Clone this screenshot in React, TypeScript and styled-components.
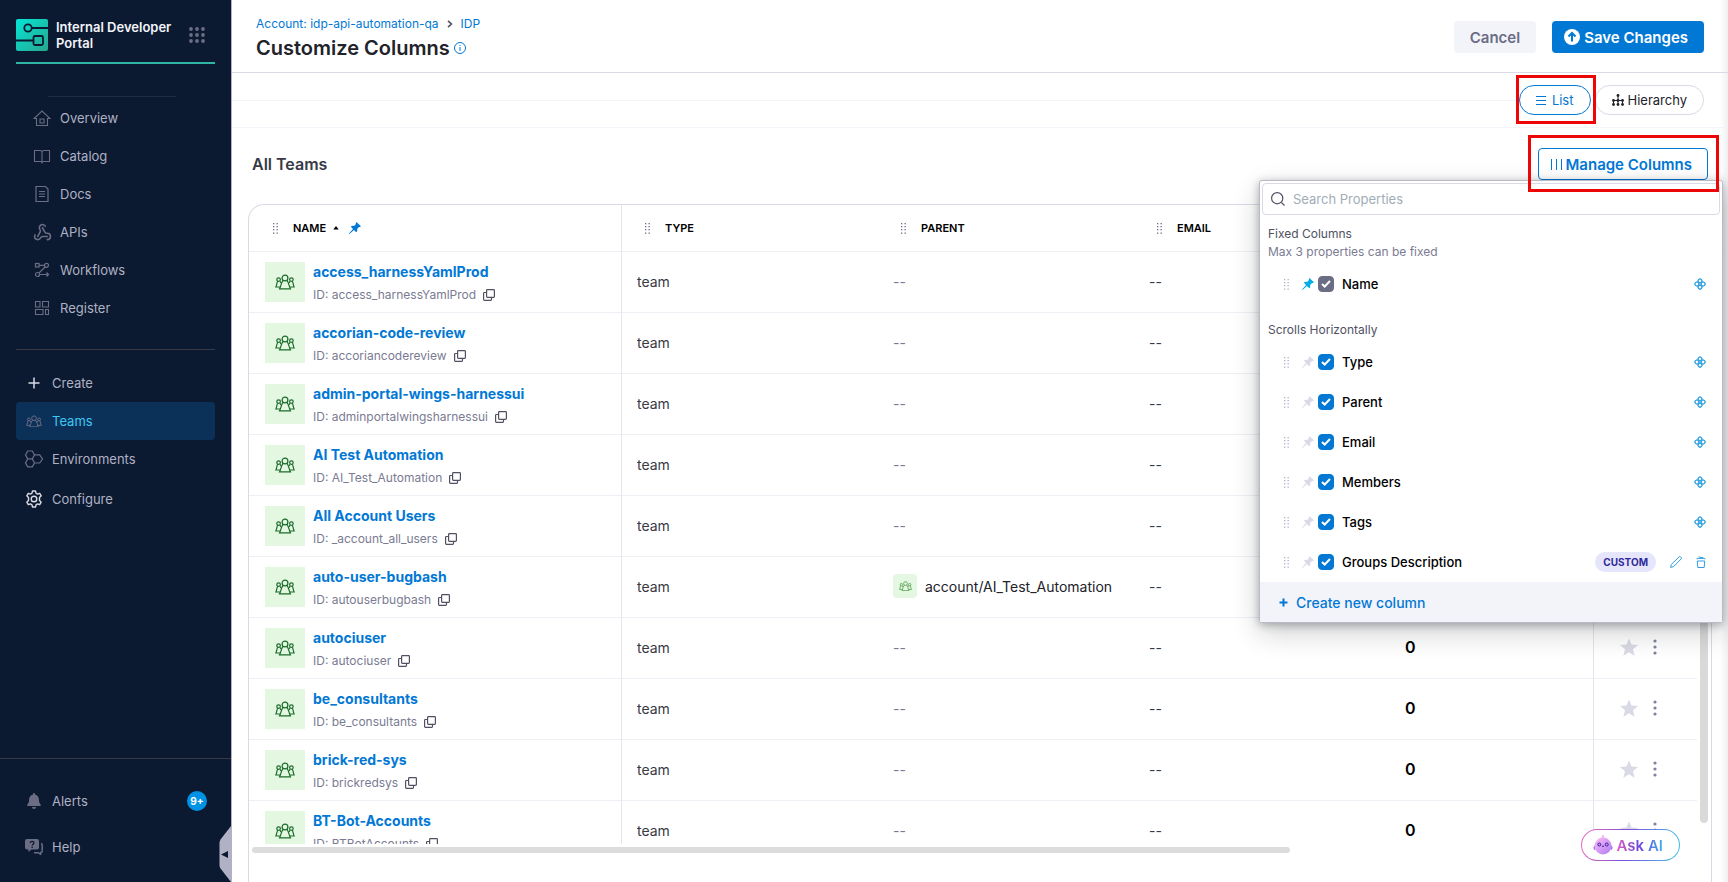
import React, { useState } from "react";
import styled, { createGlobalStyle, css } from "styled-components";
import { Webhook } from "lucide-react";

const GlobalStyle = createGlobalStyle`
  *, *::before, *::after { box-sizing: border-box; }
  body {
    margin: 0;
    font-family: Inter, "Liberation Sans", sans-serif;
    font-size: 14px;
    color: #22222a;
    background: #fff;
  }
  button, input { font-family: inherit; margin: 0; }
  button { cursor: pointer; }
  a { text-decoration: none; }
  svg { display: block; flex: none; }
`;

/* ---------- icons ---------- */

const TeamIcon = ({ size = 20 }: { size?: number }) => (
  <svg width={size} height={size * 0.8} viewBox="0 0 20 16" fill="none" stroke="currentColor" strokeWidth="1.2">
    <circle cx="10" cy="4" r="2.9" />
    <path d="M8 6.4C6.3 8.6 5.9 12 4.6 14.8h10.8C14.1 12 13.7 8.6 12 6.4" />
    <circle cx="3.6" cy="5.6" r="1.8" />
    <circle cx="16.4" cy="5.6" r="1.8" />
    <path d="M2.6 7.2C1.8 9 1.8 11 .9 13h4.2M5 7.2l.9 1.8M17.4 7.2c.8 1.8.8 3.8 1.7 5.8h-4.2M15 7.2l-.9 1.8" />
  </svg>
);

const HomeIcon = () => (
  <svg width="18" height="18" viewBox="0 0 18 18" fill="none" stroke="currentColor" strokeWidth="1.1">
    <path d="M3.500 9.500H1L9 2l8 7.500h-2.500v7h-11zM7 10h4v4H7z" />
  </svg>
);
const BookIcon = () => (
  <svg width="18" height="18" viewBox="0 0 18 18" fill="none" stroke="currentColor" strokeWidth="1.1">
    <path d="M9 16.500V5.500c0-1.300-.7-2-2-2H1.500v11h6c1 0 1.500.3 1.500 1M9 5.500c0-1.300.7-2 2-2h5.500v11h-6c-1 0-1.500.3-1.500 1" />
  </svg>
);
const DocIcon = () => (
  <svg width="18" height="18" viewBox="0 0 18 18" fill="none" stroke="currentColor" strokeWidth="1.2">
    <path d="M3 1.500h9.500L15 4v12.500H3zM6 6.500h6M6 9h6M6 11.500h6" />
  </svg>
);
const FlowIcon = () => (
  <svg width="18" height="18" viewBox="0 0 18 18" fill="none" stroke="currentColor" strokeWidth="1.2">
    <rect x="2.500" y="2.500" width="3.500" height="3.500" />
    <circle cx="13.500" cy="4.300" r="2" />
    <circle cx="4.500" cy="13.500" r="2" />
    <path d="M6 4.300h5.500M12 6l-6 6M6.500 13.500h9M13.500 11.500l2 2-2 2" />
  </svg>
);
const RegisterIcon = () => (
  <svg width="18" height="18" viewBox="0 0 18 18" fill="none" stroke="currentColor" strokeWidth="1.1">
    <path d="M2.500 2.500H7V8H2.500zM9.500 2.500h6V8h-6zM2.500 10.500H10v5H2.500zM12.500 10.500h3v5h-3z" />
  </svg>
);
const PlusIcon = ({ size = 18, weight = 1.5 }: { size?: number; weight?: number }) => (
  <svg width={size} height={size} viewBox="0 0 18 18" stroke="currentColor" strokeWidth={weight}>
    <path d="M9 3.500v11M3.500 9h11" />
  </svg>
);
const BoldPlusIcon = () => (
  <svg width="9" height="9" viewBox="0 0 9 9" stroke="currentColor" strokeWidth="2">
    <path d="M4.500 .5v8M.5 4.500h8" />
  </svg>
);
const HexIcon = () => (
  <svg width="20" height="18" viewBox="0 0 20 18" fill="none" stroke="currentColor" strokeWidth="1.2">
    <path d="M3.700 1h4.600l2.200 3.900-2.200 3.900H3.700L1.500 4.900zM3.700 8.900h4.600l2.200 4-2.200 4H3.700l-2.200-4zM10.500 4.900h5.200L18.500 9l-2.800 4h-5.200" />
  </svg>
);
const GearIcon = () => (
  <svg width="18" height="18" viewBox="0 0 18 18" fill="none" stroke="currentColor" strokeWidth="1.4" strokeLinejoin="round">
    <path d="M7.500 1h3l.5 2.200 1.500.9 2.200-.8 1.500 2.500L14.500 7.500v3l1.700 1.700-1.500 2.500-2.200-.8-1.500.9-.5 2.200h-3L7 14.800l-1.500-.9-2.200.8-1.500-2.500L3.500 10.500v-3L1.800 5.800l1.500-2.500 2.200.8L7 3.200z" />
    <circle cx="9" cy="9" r="2.800" />
  </svg>
);
const BellIcon = () => (
  <svg width="14" height="16" viewBox="0 0 14 16" fill="currentColor">
    <path d="M7 0a1 1 0 0 1 1 1v.6c2.300.5 3.900 2.400 3.900 4.900 0 2.800.6 3.700 1.700 5 .6.7.2 1.500-.7 1.500H1.100c-.9 0-1.300-.8-.7-1.500 1.100-1.300 1.700-2.200 1.700-5 0-2.500 1.600-4.400 3.900-4.900V1a1 1 0 0 1 1-1zM5 14h4a2 2 0 0 1-4 0z" />
  </svg>
);
const HelpIcon = () => (
  <svg width="18" height="16" viewBox="0 0 18 16">
    <path d="M2 0h10a2 2 0 0 1 2 2v6.500a2 2 0 0 1-2 2H6.500L3.500 13v-2.500H2a2 2 0 0 1-2-2V2a2 2 0 0 1 2-2z" fill="currentColor" />
    <path d="M16 4.500a1.500 1.500 0 0 1 1.200 1.500v6a1.500 1.500 0 0 1-1.500 1.500v2L13.500 13.700H9" fill="none" stroke="currentColor" strokeWidth="1.5" />
    <path d="M5.300 4c0-2.200 3.600-2.100 3.600 0 0 1.300-1.700 1.200-1.700 2.500M7.200 7.600v1.400" fill="none" stroke="#0b1a30" strokeWidth="1.3" />
  </svg>
);
const Logo = () => (
  <svg width="32" height="32" viewBox="0 0 32 32" fill="none" stroke="#0b1a30" strokeWidth="1.8">
    <defs>
      <linearGradient id="idp" x1="0" y1="0" x2="1" y2="1">
        <stop offset="0" stopColor="#04e6d6" />
        <stop offset="1" stopColor="#27a68e" />
      </linearGradient>
    </defs>
    <rect width="32" height="32" rx="2" fill="url(#idp)" stroke="none" />
    <circle cx="12" cy="9" r="3.700" />
    <path d="M16 9h16M0 21.500h17.500" />
    <rect x="17.500" y="17" width="9.500" height="9" rx="1.500" />
  </svg>
);
const AppsIcon = () => (
  <svg width="16" height="16" viewBox="0 0 16 16" fill="currentColor">
    {[2, 8, 14].map((y) => [2, 8, 14].map((x) => <circle key={`${x}-${y}`} cx={x} cy={y} r="1.900" />))}
  </svg>
);
const InfoIcon = () => (
  <svg width="12" height="12" viewBox="0 0 12 12" fill="none" stroke="currentColor">
    <circle cx="6" cy="6" r="5.500" />
    <path d="M6 5v4M6 3v1" />
  </svg>
);
const ChevronIcon = () => (
  <svg width="6" height="8" viewBox="0 0 6 8" fill="none" stroke="currentColor" strokeWidth="1.6">
    <path d="m1 .8 3.400 3.200L1 7.200" />
  </svg>
);
const UploadIcon = () => (
  <svg width="16" height="16" viewBox="0 0 16 16">
    <circle cx="8" cy="8" r="8" fill="#fff" />
    <path d="M8 12.500V4.500M4.500 7.500 8 4l3.500 3.500" fill="none" stroke="#0278d5" strokeWidth="2" />
  </svg>
);
const ListIcon = () => (
  <svg width="10" height="10" viewBox="0 0 10 10" stroke="currentColor">
    <path d="M0 1.500h10M0 5.500h10M0 9.500h10" />
  </svg>
);
const HierarchyIcon = () => (
  <svg width="12" height="12" viewBox="0 0 12 12" fill="currentColor" stroke="currentColor">
    <path d="M6 1v10M1.500 10.500v-4h9v4" fill="none" />
    {[[6, 1.5], [1.5, 6.5], [6, 6.5], [10.5, 6.5], [1.5, 10.5], [6, 10.5], [10.5, 10.5]].map(([x, y]) => (
      <circle key={`${x}-${y}`} cx={x} cy={y} r="1.400" stroke="none" />
    ))}
  </svg>
);
const BarsIcon = () => (
  <svg width="11" height="11" viewBox="0 0 11 11" stroke="currentColor">
    <path d="M.5 0v11M5.500 0v11M10.500 0v11" />
  </svg>
);
const GripIcon = () => (
  <svg width="5" height="11" viewBox="0 0 5 11" fill="currentColor">
    {[0, 3, 6, 9.5].map((y) => [0, 3.5].map((x) => <rect key={`${x}-${y}`} x={x} y={y} width="1.3" height="1.3" />))}
  </svg>
);
const PinIcon = () => (
  <svg width="12" height="12" viewBox="0 0 12 12" fill="currentColor">
    <path d="M7.400 0 12 4.300l-1.200.8-.8-.1-1.900 1.900c.4 1.500 0 2.500-.8 3.300L4.900 8 .5 12 0 11.500 4 7.100 1.800 4.800c.9-.8 1.900-1.200 3.300-.8L7 2.100l-.2-.9z" />
  </svg>
);
const SortIcon = () => (
  <svg width="6" height="4" viewBox="0 0 6 4" fill="currentColor">
    <path d="M3 0l2.700 3.500H.3z" />
  </svg>
);
const CopyIcon = () => (
  <svg width="12" height="12" viewBox="0 0 12 12" fill="none" stroke="currentColor" strokeWidth="1.2">
    <rect x="3.600" y=".6" width="7.800" height="7.800" rx=".8" />
    <path d="M3.600 3.500H1.400a.8.800 0 0 0-.8.800v6.300a.8.800 0 0 0 .8.800h6.300a.8.800 0 0 0 .8-.8V8.400" />
  </svg>
);
const StarIcon = () => (
  <svg width="20" height="19" viewBox="0 0 20 19" fill="currentColor">
    <path d="m10 .5 2.500 6 6.500.5-5 4.200 1.600 6.600L10 14.300l-5.600 3.500L6 11.200 1 7l6.500-.5z" />
  </svg>
);
const DotsIcon = () => (
  <svg width="4" height="16" viewBox="0 0 4 16" fill="currentColor">
    <circle cx="2" cy="2" r="1.600" />
    <circle cx="2" cy="8" r="1.600" />
    <circle cx="2" cy="14" r="1.600" />
  </svg>
);
const SearchIcon = () => (
  <svg width="14" height="14" viewBox="0 0 14 14" fill="none" stroke="currentColor" strokeWidth="1.2">
    <circle cx="6.200" cy="6.200" r="5.600" />
    <path d="m10.300 10.300 3.200 3.200" />
  </svg>
);
const HarnessIcon = () => (
  <svg width="12" height="12" viewBox="0 0 12 12" fill="none" stroke="currentColor" strokeWidth="1.3">
    <rect x="4.200" y="1.100" width="3.600" height="3.600" rx="1.300" transform="rotate(45 6 2.900)" />
    <rect x="4.200" y="7.300" width="3.600" height="3.600" rx="1.300" transform="rotate(45 6 9.100)" />
    <rect x="1.100" y="4.200" width="3.600" height="3.600" rx="1.300" transform="rotate(45 2.900 6)" />
    <rect x="7.300" y="4.200" width="3.600" height="3.600" rx="1.300" transform="rotate(45 9.100 6)" />
  </svg>
);
const PencilIcon = () => (
  <svg width="12" height="12" viewBox="0 0 12 12" fill="none" stroke="currentColor">
    <path d="M.6 11.400 1.300 8.500 9 .9a1 1 0 0 1 1.500 0l.6.600a1 1 0 0 1 0 1.500L3.500 10.700z" />
  </svg>
);
const TrashIcon = () => (
  <svg width="10" height="12" viewBox="0 0 10 12" fill="none" stroke="currentColor">
    <path d="M.5 2.800c3-.6 6-.6 9 0M2.500 1l5 .8M1.300 5h7.400l-.5 6.500H1.800z" />
  </svg>
);
const CheckIcon = () => (
  <svg width="10" height="8" viewBox="0 0 10 8" fill="none" stroke="#fff" strokeWidth="2">
    <path d="m1 4 2.700 2.500L9 1" />
  </svg>
);
const RobotIcon = () => (
  <svg width="20" height="20" viewBox="0 0 20 20">
    <defs>
      <linearGradient id="bot" x1="0" y1="0" x2="1" y2="1">
        <stop offset="0" stopColor="#fcbdf5" />
        <stop offset="1" stopColor="#b07af5" />
      </linearGradient>
    </defs>
    <path d="M10 0v3" stroke="#f3b4ef" strokeWidth="1.5" />
    <circle cx="10" cy="1.200" r="1.200" fill="#f9bdf2" />
    <path d="M2 10 .3 12.500l.8 2.500 2-1M18 10l1.700 2.500-.8 2.500-2-1" fill="#a374ee" />
    <circle cx="10" cy="11" r="8.500" fill="url(#bot)" />
    <circle cx="6.300" cy="9.500" r="1.500" fill="#c79cf6" stroke="#3b1d9a" />
    <circle cx="13.700" cy="9.500" r="1.500" fill="#c79cf6" stroke="#3b1d9a" />
    <path d="M9 11q1 1 2 0" fill="none" stroke="#3b1d9a" />
  </svg>
);

/* ---------- sidebar ---------- */

const Page = styled.div`
  display: flex;
  height: 100vh;
  overflow: hidden;
`;

const Sidebar = styled.aside`
  position: relative;
  width: 232px;
  flex: none;
  display: flex;
  flex-direction: column;
  background: #0b1a30;
  border-right: 1px solid #b0b1c4;
  color: #b0b1c4;
  font-size: 13px;
`;

const Brand = styled.div`
  display: flex;
  align-items: center;
  gap: 8px;
  margin: 16px 16px 0;
  height: 48px;
  padding: 0 10px 8px 0;
  border-bottom: 2px solid #30b5a3;
  color: #6b6d85;
`;

const BrandName = styled.div`
  flex: 1;
  font-weight: 600;
  line-height: 16px;
  color: #f3f3fa;
`;

const IconButton = styled.button<{ $color?: string }>`
  display: flex;
  padding: 0;
  border: 0;
  background: none;
  color: ${(p) => p.$color ?? "inherit"};
`;

const NavRule = styled.hr<{ $inset?: boolean }>`
  width: ${(p) => (p.$inset ? "128px" : "auto")};
  margin: ${(p) => (p.$inset ? "32px 48px 2px" : "22px 16px 14px")};
  border: 0;
  border-top: 1px solid ${(p) => (p.$inset ? "#1f2d42" : "#383946")};
`;

const Nav = styled.nav<{ $indent?: boolean }>`
  display: flex;
  flex-direction: column;
  padding: ${(p) => (p.$indent ? "0 16px 0 24px" : "0 16px")};
`;

const NavLink = styled.a<{ $active?: boolean; $tall?: boolean }>`
  display: flex;
  align-items: center;
  gap: 8px;
  height: ${(p) => (p.$tall ? "42px" : "38px")};
  padding: 0 8px;
  border-radius: 4px;
  color: ${(p) => (p.$active ? "#3dc7f6" : "#b0b1c4")};
  ${(p) =>
    p.$active &&
    css`
      background: #0c3158;
    `}
`;

const NavIcon = styled.span<{ $bright?: boolean }>`
  display: flex;
  justify-content: center;
  width: 20px;
  color: ${(p) => (p.$bright ? "#d9dae5" : "#6b6d85")};
`;

const SidebarFooter = styled.div`
  margin-top: auto;
  padding: 19px 16px 12px;
  border-top: 1px solid #383946;
  display: flex;
  flex-direction: column;
`;

const FooterLink = styled.a`
  display: flex;
  align-items: center;
  gap: 8px;
  height: 46px;
  padding: 0 8px;
  color: #b0b1c4;
`;

const Badge = styled.span`
  margin-left: auto;
  width: 20px;
  height: 20px;
  border-radius: 10px;
  background: #0092e4;
  color: #fff;
  font-size: 10px;
  font-weight: 700;
  line-height: 20px;
  text-align: center;
`;

const CollapseTab = styled.button`
  position: absolute;
  right: 0;
  bottom: 0;
  padding: 0;
  border: 0;
  background: none;
`;

/* ---------- header and controls ---------- */

const Main = styled.main`
  flex: 1;
  min-width: 0;
  display: flex;
  flex-direction: column;
  background: linear-gradient(to left, #f0f0f1, #fff 8px);
`;

const TopBar = styled.header`
  display: flex;
  align-items: center;
  justify-content: space-between;
  height: 73px;
  padding: 2px 24px 0;
  border-bottom: 1px solid #d9dae5;
`;

const Heading = styled.div`
  padding-top: 4px;
`;

const Crumbs = styled.nav`
  display: flex;
  align-items: center;
  gap: 8px;
  margin-bottom: 2px;
  font-size: 12px;
  line-height: 16px;
  color: #4f5162;
`;

const CrumbLink = styled.a`
  color: #0278d5;
`;

const TitleRow = styled.div`
  display: flex;
  align-items: center;
  gap: 4px;
  color: #0278d5;
`;

const Title = styled.h1`
  margin: 0;
  font-size: 20px;
  line-height: 28px;
  font-weight: 600;
  color: #22222a;
`;

const Actions = styled.div`
  display: flex;
  align-items: center;
  gap: 16px;
`;

const buttonBase = css`
  display: flex;
  align-items: center;
  gap: 4px;
  height: 32px;
  border-radius: 4px;
  font-size: 15px;
  font-weight: 600;
`;

const Button = styled.button<{ $variant: "primary" | "muted" | "outline" }>`
  ${buttonBase}
  ${(p) =>
    p.$variant === "primary" &&
    css`
      padding: 0 16px 0 12px;
      border: 0;
      background: #0278d5;
      color: #fff;
    `}
  ${(p) =>
    p.$variant === "muted" &&
    css`
      padding: 0 16px;
      border: 0;
      background: #f3f3fa;
      color: #6b6d85;
    `}
  ${(p) =>
    p.$variant === "outline" &&
    css`
      padding: 0 15px 0 12px;
      border: 1px solid #0278d5;
      background: #fff;
      color: #0278d5;
    `}
`;

const ViewBar = styled.div`
  display: flex;
  align-items: center;
  height: 55px;
  padding-right: 24px;
  border-bottom: 1px solid #f3f3fa;
`;

const ViewRule = styled.div`
  flex: 1;
  height: 1px;
  background: #f3f3fa;
`;

const ViewSwitch = styled.div`
  display: flex;
  gap: 4px;
`;

const Marked = styled.div`
  position: relative;
`;

const MarkBox = styled.span<{ $inset: string }>`
  position: absolute;
  inset: ${(p) => p.$inset};
  border: 3px solid #ec0606;
  pointer-events: none;
  z-index: 3;
`;

const Pill = styled.button<{ $active?: boolean }>`
  display: flex;
  align-items: center;
  gap: ${(p) => (p.$active ? "6px" : "4px")};
  height: 30px;
  padding: 0 16px;
  border: 1px solid ${(p) => (p.$active ? "#0278d5" : "#d9dae5")};
  border-radius: 15px;
  background: #fff;
  color: ${(p) => (p.$active ? "#0278d5" : "#22222a")};
  font-size: 13px;
`;

const ListHeader = styled.div`
  display: flex;
  align-items: flex-start;
  justify-content: space-between;
  padding: 20px 20px 24px;
`;

const ListTitle = styled.h2`
  margin: 0;
  font-size: 16px;
  line-height: 32px;
  font-weight: 600;
  color: #383946;
`;

/* ---------- manage columns popover ---------- */

const Popover = styled.div`
  position: absolute;
  top: 100%;
  right: -15px;
  z-index: 2;
  width: 464px;
  padding-top: 2px;
  border: 1px solid #b9bac6;
  border-radius: 3px;
  background: #fff;
  box-shadow: 0 2px 8px rgba(16, 22, 26, 0.3), 0 10px 28px rgba(16, 22, 26, 0.2);
`;

const SearchBox = styled.label`
  display: flex;
  align-items: center;
  gap: 6px;
  height: 32px;
  margin: 0 2px;
  padding: 0 8px;
  border: 1px solid #d9dae5;
  border-radius: 4px;
  color: #4f5162;
`;

const SearchInput = styled.input`
  flex: 1;
  border: 0;
  outline: 0;
  background: none;
  font-size: 13px;
  &::placeholder { color: #9fadb8; }
`;

const GroupHeading = styled.div`
  padding: 10px 8px 3px;
  font-size: 12px;
  line-height: 18px;
  color: #4f5162;
`;

const GroupHint = styled.div`
  color: #7a7b93;
`;

const Rows = styled.ul<{ $spaced?: boolean }>`
  list-style: none;
  margin: 0 0 ${(p) => (p.$spaced ? "7px" : "0")};
  padding: 0 16px 0 24px;
`;

const ColumnRow = styled.li`
  display: flex;
  align-items: center;
  height: 40px;
  color: #b0b1c4;
`;

const PinButton = styled(IconButton)`
  margin: 0 4px 0 13px;
`;

const CheckLabel = styled.label`
  flex: 1;
  display: flex;
  align-items: center;
  gap: 8px;
  font-size: 13px;
  font-weight: 500;
  color: #000;
`;

const CheckWrap = styled.span`
  display: grid;
  place-items: center;
  > * { grid-area: 1 / 1; }
`;

const CheckInput = styled.input`
  appearance: none;
  width: 16px;
  height: 16px;
  border-radius: 4px;
  background: #fff;
  border: 1px solid #b0b1c4;
  &:checked { background: #0278d5; border-color: #0278d5; }
  &:checked:disabled { background: #6b6d85; border-color: #6b6d85; }
`;

const RowTools = styled.span`
  display: flex;
  align-items: center;
  gap: 14px;
  color: #2f9fe0;
`;

const CustomTag = styled.span`
  height: 20px;
  padding: 0 8px;
  border-radius: 10px;
  background: #e5e5fb;
  color: #2f2a9a;
  font-size: 10px;
  font-weight: 700;
  line-height: 20px;
`;

const CreateButton = styled.button`
  display: flex;
  align-items: center;
  gap: 8px;
  width: 100%;
  height: 40px;
  padding: 0 19px;
  border: 0;
  background: #f3f3fa;
  color: #0278d5;
  font-size: 14px;
  font-weight: 500;
`;

/* ---------- table ---------- */

const Card = styled.section`
  flex: 1;
  min-height: 0;
  margin: 0 16px;
  padding-bottom: 29px;
  display: flex;
  flex-direction: column;
  border: 1px solid #d9dae5;
  border-bottom: 0;
  border-radius: 16px 16px 0 0;
`;

const Viewport = styled.div`
  flex: 1;
  min-height: 0;
  display: flex;
  gap: 3px;
  padding-right: 3px;
`;

const TableClip = styled.div`
  flex: 1;
  min-width: 0;
  overflow: hidden;
`;

const VerticalBar = styled.div`
  width: 8px;
  margin: 48px 0 21px;
  border-radius: 4px;
  background: #d9d9d9;
`;

const HorizontalBar = styled.div`
  width: 71%;
  height: 6px;
  margin: 3px 3px 0;
  border-radius: 3px;
  background: #dcdcdc;
`;

const Table = styled.table`
  width: 100%;
  table-layout: fixed;
  border-collapse: separate;
  border-spacing: 0;
`;

const Col = styled.col<{ $width?: number }>`
  width: ${(p) => (p.$width ? `${p.$width}px` : "auto")};
`;

const HeadCell = styled.th<{ $first?: boolean; $divider?: boolean }>`
  height: 47px;
  padding: 0 0 0 ${(p) => (p.$first ? "24px" : "23px")};
  border-bottom: 1px solid #eeeef5;
  ${(p) => p.$divider && css`border-right: 1px solid #e4e4ee;`}
  font-size: 11px;
  font-weight: 600;
  text-align: left;
  color: #000;
`;

const HeadLabel = styled.div`
  display: flex;
  align-items: center;
`;

const HeadText = styled.span`
  margin: 0 7px 0 15px;
`;

const HeadPin = styled.span`
  margin-left: 10px;
  color: #0278d5;
`;

const GripHandle = styled.span`
  color: #6b6d85;
`;

const Cell = styled.td<{ $first?: boolean; $divider?: boolean; $muted?: boolean }>`
  height: 61px;
  padding: ${(p) => (p.$first ? "0 0 0 16px" : "0 0 2px 15px")};
  border-bottom: 1px solid #eeeef5;
  ${(p) => p.$divider && css`border-right: 1px solid #e4e4ee;`}
  color: ${(p) => (p.$muted ? "#7a7b93" : "#383946")};
`;

const Entity = styled.div<{ $dark?: boolean }>`
  display: flex;
  align-items: center;
  gap: 8px;
  color: #22222a;
`;

const Avatar = styled.span<{ $small?: boolean }>`
  display: flex;
  align-items: center;
  justify-content: center;
  width: ${(p) => (p.$small ? 24 : 40)}px;
  height: ${(p) => (p.$small ? 24 : 40)}px;
  border-radius: ${(p) => (p.$small ? "4px" : "0")};
  background: #e4f7e1;
  color: ${(p) => (p.$small ? "#4f9a45" : "#1b6c2b")};
`;

const EntityText = styled.div`
  padding-top: 2px;
`;

const EntityLink = styled.a`
  display: block;
  font-size: 14px;
  font-weight: 700;
  line-height: 20px;
  color: #0278d5;
`;

const EntityId = styled.div`
  display: flex;
  align-items: center;
  gap: 7px;
  margin-top: 3px;
  font-size: 12px;
  line-height: 20px;
  color: #7a7b93;
`;

const Count = styled.span`
  font-size: 16px;
  font-weight: 600;
  color: #000;
`;

const RowActions = styled.div`
  display: flex;
  align-items: center;
  gap: 14px;
  padding-left: 10px;
`;

const AskButton = styled.button`
  position: fixed;
  right: 48px;
  bottom: 21px;
  z-index: 4;
  display: flex;
  align-items: center;
  gap: 4px;
  height: 32px;
  padding: 0 16px 0 11px;
  border: 1px solid transparent;
  border-radius: 16px;
  background: linear-gradient(#fff, #fff) padding-box,
    linear-gradient(100deg, #f26bb5, #7c4fe0 45%, #42c3e8) border-box;
`;

const AskText = styled.span`
  font-size: 15px;
  font-weight: 600;
  background: linear-gradient(90deg, #d65fc0, #6a45dd 50%, #42b3e8);
  background-clip: text;
  color: transparent;
`;

/* ---------- data ---------- */

const primaryNav = [
  { label: "Overview", icon: <HomeIcon /> },
  { label: "Catalog", icon: <BookIcon /> },
  { label: "Docs", icon: <DocIcon /> },
  { label: "APIs", icon: <Webhook size={19} strokeWidth={2} /> },
  { label: "Workflows", icon: <FlowIcon /> },
  { label: "Register", icon: <RegisterIcon /> },
];

const teams = [
  { name: "access_harnessYamlProd", id: "access_harnessYamlProd" },
  { name: "accorian-code-review", id: "accoriancodereview" },
  { name: "admin-portal-wings-harnessui", id: "adminportalwingsharnessui" },
  { name: "AI Test Automation", id: "AI_Test_Automation" },
  { name: "All Account Users", id: "_account_all_users" },
  { name: "auto-user-bugbash", id: "autouserbugbash", parent: "account/AI_Test_Automation" },
  { name: "autociuser", id: "autociuser" },
  { name: "be_consultants", id: "be_consultants" },
  { name: "brick-red-sys", id: "brickredsys" },
  { name: "BT-Bot-Accounts", id: "BTBotAccounts" },
];

const scrollColumns = ["Type", "Parent", "Email", "Members", "Tags", "Groups Description"];

function ColumnOption({ label, fixed, custom }: { label: string; fixed?: boolean; custom?: boolean }) {
  const [checked, setChecked] = useState(true);
  return (
    <ColumnRow>
      <GripIcon />
      <PinButton aria-label={`Pin ${label}`} $color={fixed ? "#00ade4" : "#d9dae5"}>
        <PinIcon />
      </PinButton>
      <CheckLabel>
        <CheckWrap>
          <CheckInput type="checkbox" checked={checked} disabled={fixed} onChange={() => setChecked(!checked)} />
          {checked && <CheckIcon />}
        </CheckWrap>
        {label}
      </CheckLabel>
      <RowTools>
        {custom ? (
          <>
            <CustomTag>CUSTOM</CustomTag>
            <IconButton aria-label="Edit column"><PencilIcon /></IconButton>
            <IconButton aria-label="Delete column"><TrashIcon /></IconButton>
          </>
        ) : (
          <HarnessIcon />
        )}
      </RowTools>
    </ColumnRow>
  );
}

function ColumnHead({ label, pinned }: { label: string; pinned?: boolean }) {
  return (
    <HeadCell $first={pinned} $divider={pinned}>
      <HeadLabel>
        <GripHandle><GripIcon /></GripHandle>
        <HeadText>{label}</HeadText>
        {pinned && (
          <>
            <SortIcon />
            <HeadPin><PinIcon /></HeadPin>
          </>
        )}
      </HeadLabel>
    </HeadCell>
  );
}

export default function App() {
  return (
    <>
      <GlobalStyle />
      <Page>
        <Sidebar>
          <Brand>
            <Logo />
            <BrandName>Internal Developer Portal</BrandName>
            <IconButton aria-label="Switch module"><AppsIcon /></IconButton>
          </Brand>
          <NavRule $inset />
          <Nav $indent>
            {primaryNav.map((item) => (
              <NavLink href="#" key={item.label}>
                <NavIcon>{item.icon}</NavIcon>
                {item.label}
              </NavLink>
            ))}
          </Nav>
          <NavRule />
          <Nav>
            <NavLink href="#"><NavIcon $bright><PlusIcon /></NavIcon>Create</NavLink>
            <NavLink href="#" $active><NavIcon><TeamIcon size={16} /></NavIcon>Teams</NavLink>
            <NavLink href="#"><NavIcon><HexIcon /></NavIcon>Environments</NavLink>
            <NavLink href="#" $tall><NavIcon $bright><GearIcon /></NavIcon>Configure</NavLink>
          </Nav>
          <SidebarFooter>
            <FooterLink href="#">
              <NavIcon><BellIcon /></NavIcon>
              Alerts
              <Badge>9+</Badge>
            </FooterLink>
            <FooterLink href="#">
              <NavIcon><HelpIcon /></NavIcon>
              Help
            </FooterLink>
          </SidebarFooter>
          <CollapseTab aria-label="Collapse menu">
            <svg width="12" height="56" viewBox="0 0 12 56">
              <path d="M12 0v56L1.500 42.500Q.5 41 .5 39V17q0-2 1-3.500z" fill="#b0b1c4" />
              <path d="M9 25v7L2 28.500z" fill="#0b1a30" />
            </svg>
          </CollapseTab>
        </Sidebar>

        <Main>
          <TopBar>
            <Heading>
              <Crumbs aria-label="Breadcrumb">
                <CrumbLink href="#">Account: idp-api-automation-qa</CrumbLink>
                <ChevronIcon />
                <CrumbLink href="#">IDP</CrumbLink>
              </Crumbs>
              <TitleRow>
                <Title>Customize Columns</Title>
                <InfoIcon />
              </TitleRow>
            </Heading>
            <Actions>
              <Button $variant="muted">Cancel</Button>
              <Button $variant="primary"><UploadIcon />Save Changes</Button>
            </Actions>
          </TopBar>

          <ViewBar>
            <ViewRule />
            <ViewSwitch>
              <Marked>
                <Pill $active><ListIcon />List</Pill>
                <MarkBox $inset="-10px -5px -9px -3px" />
              </Marked>
              <Pill><HierarchyIcon />Hierarchy</Pill>
            </ViewSwitch>
          </ViewBar>

          <ListHeader>
            <ListTitle>All Teams</ListTitle>
            <Marked>
              <Button $variant="outline"><BarsIcon />Manage Columns</Button>
              <Popover>
                <SearchBox>
                  <SearchIcon />
                  <SearchInput type="search" placeholder="Search Properties" aria-label="Search Properties" />
                </SearchBox>
                <GroupHeading>
                  Fixed Columns
                  <GroupHint>Max 3 properties can be fixed</GroupHint>
                </GroupHeading>
                <Rows $spaced>
                  <ColumnOption label="Name" fixed />
                </Rows>
                <GroupHeading>Scrolls Horizontally</GroupHeading>
                <Rows>
                  {scrollColumns.map((label) => (
                    <ColumnOption key={label} label={label} custom={label === "Groups Description"} />
                  ))}
                </Rows>
                <CreateButton><BoldPlusIcon />Create new column</CreateButton>
              </Popover>
              <MarkBox $inset="-13px -11px -12px -10px" />
            </Marked>
          </ListHeader>

          <Card>
            <Viewport>
              <TableClip>
                <Table>
                  <colgroup>
                    <Col $width={373} />
                    <Col $width={256} />
                    <Col $width={256} />
                    <Col $width={256} />
                    <Col />
                    <Col $width={103} />
                  </colgroup>
                  <thead>
                    <tr>
                      <ColumnHead label="NAME" pinned />
                      <ColumnHead label="TYPE" />
                      <ColumnHead label="PARENT" />
                      <ColumnHead label="EMAIL" />
                      <HeadCell $divider />
                      <HeadCell />
                    </tr>
                  </thead>
                  <tbody>
                    {teams.map((team) => (
                      <tr key={team.id}>
                        <Cell $first $divider>
                          <Entity>
                            <Avatar><TeamIcon /></Avatar>
                            <EntityText>
                              <EntityLink href="#">{team.name}</EntityLink>
                              <EntityId>
                                ID: {team.id}
                                <IconButton aria-label="Copy ID" $color="#4f5162"><CopyIcon /></IconButton>
                              </EntityId>
                            </EntityText>
                          </Entity>
                        </Cell>
                        <Cell>team</Cell>
                        <Cell $muted={!team.parent}>
                          {team.parent ? (
                            <Entity>
                              <Avatar $small><TeamIcon size={13} /></Avatar>
                              {team.parent}
                            </Entity>
                          ) : (
                            "--"
                          )}
                        </Cell>
                        <Cell>--</Cell>
                        <Cell $divider><Count>0</Count></Cell>
                        <Cell>
                          <RowActions>
                            <IconButton aria-label="Favorite" $color="#d9dae5"><StarIcon /></IconButton>
                            <IconButton aria-label="More options" $color="#8081a0"><DotsIcon /></IconButton>
                          </RowActions>
                        </Cell>
                      </tr>
                    ))}
                  </tbody>
                </Table>
              </TableClip>
              <VerticalBar />
            </Viewport>
            <HorizontalBar />
          </Card>
        </Main>
        <AskButton><RobotIcon /><AskText>Ask AI</AskText></AskButton>
      </Page>
    </>
  );
}
